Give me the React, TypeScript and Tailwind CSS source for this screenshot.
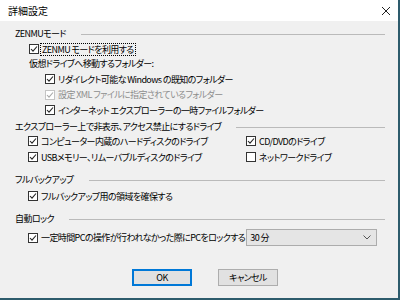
import React from "react";

const font = "font-['Meiryo_UI','Noto_Sans_CJK_JP',sans-serif] [font-feature-settings:'palt']";

const CheckBox = ({ checked, disabled }: { checked: boolean; disabled?: boolean }) => (
    <span
        className={`flex w-[10px] h-[10px] shrink-0 items-center justify-center border bg-white ${
            disabled ? "border-[#c4c4c4]" : "border-[#333333]"
        }`}
    >
        {checked && (
            <svg width="8" height="8" viewBox="0 0 8 8">
                <polyline
                    points="1,4 3,6.2 7,1.5"
                    fill="none"
                    stroke={disabled ? "#a8a8a8" : "#222222"}
                    strokeWidth="1.1"
                />
            </svg>
        )}
    </span>
);

const CheckRow = ({
    label,
    checked,
    disabled,
    focus,
    className = "h-4",
}: {
    label: string;
    checked: boolean;
    disabled?: boolean;
    focus?: boolean;
    className?: string;
}) => (
    <div className={`flex items-center gap-[2px] whitespace-nowrap ${className}`}>
        <CheckBox checked={checked} disabled={disabled} />
        <span
            className={`px-[1px] leading-[11px] ${disabled ? "text-[#8d8d8d]" : "text-black"} ${
                focus ? "outline outline-1 outline-dotted outline-black" : ""
            }`}
        >
            {label}
        </span>
    </div>
);

const GroupHeader = ({ label, className = "" }: { label: string; className?: string }) => (
    <div className={`flex h-4 items-center gap-[15px] pr-[13px] whitespace-nowrap ${className}`}>
        <span className="text-black">{label}</span>
        <div className="h-px flex-1 bg-[#bababa]" />
    </div>
);

const App = () => {
    return (
        <div
            className={`${font} flex h-[300px] w-[400px] flex-col overflow-hidden border-r-2 border-b-2 border-[#2d5b6c] bg-[#f0f0f0] text-[9px] tracking-[-0.6px]`}
        >
            <div className="flex h-[21px] shrink-0 items-center justify-between bg-white pl-2 pr-[7px]">
                <span className="text-[10px] tracking-normal text-black">詳細設定</span>
                <svg width="10" height="10" viewBox="0 0 10 10">
                    <path d="M1 1 L9 9 M9 1 L1 9" stroke="#222" strokeWidth="1" />
                </svg>
            </div>

            <div className="flex flex-col pl-[15px]">
                <GroupHeader label="ZENMUモード" className="mt-[5px]" />
                <div className="flex flex-col pl-[14px]">
                    <CheckRow label="ZENMU モードを利用する" checked focus className="h-[14px]" />
                    <div className="flex h-[15px] items-center text-black">仮想ドライブへ移動するフォルダー:</div>
                    <div className="flex flex-col pl-[16px]">
                        <CheckRow label="リダイレクト可能な Windows の既知のフォルダー" checked className="h-4" />
                        <CheckRow label="設定 XML ファイルに指定されているフォルダー" checked disabled className="h-[15px]" />
                        <CheckRow label="インターネット エクスプローラーの一時ファイルフォルダー" checked className="h-4" />
                    </div>
                </div>

                <GroupHeader label="エクスプローラー上で非表示、アクセス禁止にするドライブ" className="mt-[1px]" />
                <div className="grid grid-cols-[218px_1fr] pl-[13px] mt-[-2px]">
                    <CheckRow label="コンピューター内蔵のハードディスクのドライブ" checked />
                    <CheckRow label="CD/DVDのドライブ" checked />
                    <CheckRow label="USBメモリー、リムーバブルディスクのドライブ" checked />
                    <CheckRow label="ネットワークドライブ" checked={false} />
                </div>

                <GroupHeader label="フルバックアップ" className="mt-[7px]" />
                <div className="pl-[13px]">
                    <CheckRow label="フルバックアップ用の領域を確保する" checked />
                </div>

                <GroupHeader label="自動ロック" className="mt-[7px]" />
                <div className="mt-[2px] flex items-center pl-[13px] pr-[21px]">
                    <CheckRow label="一定時間PCの操作が行われなかった際にPCをロックする" checked />
                    <div className="ml-auto flex h-[17px] w-[131px] shrink-0 items-center justify-between border border-[#acacac] bg-[#e5e5e5] pl-[3px] pr-[5px]">
                        <span className="text-black">30 分</span>
                        <svg width="8" height="5" viewBox="0 0 8 5">
                            <polyline points="0.5,0.5 4,4 7.5,0.5" fill="none" stroke="#555" strokeWidth="1" />
                        </svg>
                    </div>
                </div>
            </div>

            <div className="mt-[23px] flex gap-[26px] pl-[132px]">
                <button className="flex h-[17px] w-[60px] items-center justify-center border-2 border-[#0078d7] bg-[#e1e1e1] text-black">
                    OK
                </button>
                <button className="flex h-[17px] w-[60px] items-center justify-center border border-[#adadad] bg-[#e1e1e1] text-black">
                    キャンセル
                </button>
            </div>
        </div>
    );
};

export default App;
